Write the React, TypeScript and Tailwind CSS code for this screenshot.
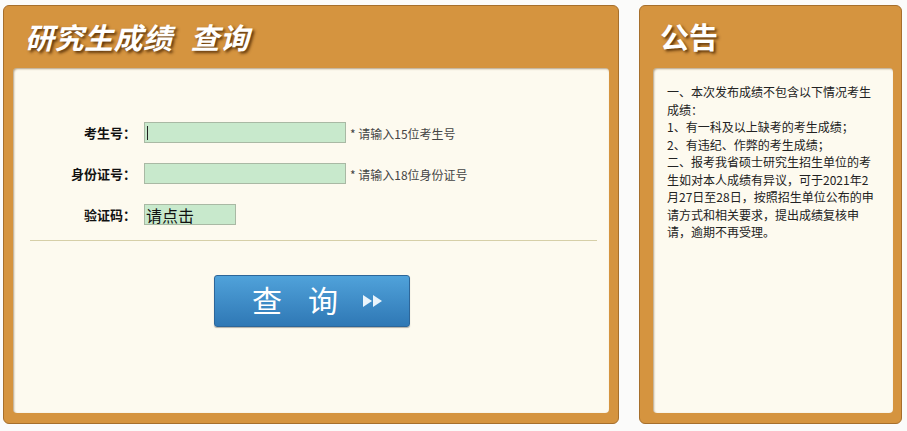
import React from "react";

const cjk = { fontFamily: '"Noto Sans CJK SC", "Noto Sans", sans-serif' };

function Row({ label, hint, children }: { label: string; hint?: string; children: React.ReactNode }) {
  return (
    <div className="flex items-center h-[21px]">
      <div className="w-[123px] text-right text-[13px] font-bold text-[#111] leading-none">{label}</div>
      <div className="ml-[8px] flex items-center">{children}</div>
      {hint && <div className="ml-[4px] text-[12px] text-[#444] leading-none mt-[3px]">{hint}</div>}
    </div>
  );
}

export default function App() {
  return (
    <div className="w-[907px] h-[431px] bg-[#fbfbfa] pt-[5px] pl-[3px] flex gap-[20px]" style={cjk}>
      {/* Left panel */}
      <div className="w-[616px] h-[419px] bg-[#d5943f] border border-[#a66f2c] rounded-[6px] flex flex-col px-[9px] pb-[10px]">
        <div className="h-[62px] flex items-center pl-[12px] pb-[2px]">
          <span className="text-[29px] font-bold italic text-white leading-none tracking-[0.5px] [text-shadow:2px_2px_3px_rgba(70,35,0,0.85)]">
            研究生成绩<span className="ml-[18px]">查询</span>
          </span>
        </div>
        <div className="flex-1 bg-[#fdfaef] rounded-[4px] shadow-[inset_1px_1px_2px_rgba(90,50,0,0.45)] flex flex-col pt-[54px]">
          <div className="flex flex-col gap-[20px]">
            <Row label="考生号：" hint="* 请输入15位考生号">
              <div className="w-[202px] h-[21px] bg-[#c8e9cc] border border-[#a9b9a4] flex items-center pl-[2px]">
                <div className="w-[1px] h-[14px] bg-[#222]" />
              </div>
            </Row>
            <Row label="身份证号：" hint="* 请输入18位身份证号">
              <div className="w-[202px] h-[21px] bg-[#c8e9cc] border border-[#a9b9a4]" />
            </Row>
            <Row label="验证码：">
              <div className="w-[92px] h-[21px] bg-[#c8e9cc] border border-[#a9b9a4] flex items-center pl-[1px] text-[16px] text-[#111] leading-none">
                请点击
              </div>
            </Row>
          </div>
          <div className="mt-[15px] ml-[17px] w-[567px] h-[1px] bg-[#d6cfa8]" />
          <div className="mt-[34px] flex justify-center pl-[2px]">
            <button className="w-[196px] h-[52px] rounded-[3px] border border-[#2d6699] bg-gradient-to-b from-[#50a2da] to-[#2f78b5] shadow-[0_1px_1px_rgba(0,0,0,0.3)] flex items-center pl-[37px] pb-[4px]">
              <span className="text-[30px] text-white leading-none">查</span>
              <span className="text-[30px] text-white leading-none ml-[26px]">询</span>
              <svg className="ml-[24px] mt-[3px]" width="22" height="14" viewBox="0 0 22 14">
                <polygon points="1,1 10,7 1,13" fill="#eaf4fb" />
                <polygon points="11,1 20,7 11,13" fill="#eaf4fb" />
              </svg>
            </button>
          </div>
        </div>
      </div>

      {/* Right panel */}
      <div className="w-[263px] h-[419px] bg-[#d5943f] border border-[#a66f2c] rounded-[6px] flex flex-col pl-[13px] pr-[8px] pb-[10px]">
        <div className="h-[62px] flex items-center pl-[7px] pb-[2px]">
          <span className="text-[29px] font-bold text-white leading-none [text-shadow:2px_2px_3px_rgba(70,35,0,0.85)]">公告</span>
        </div>
        <div className="flex-1 bg-[#fdfaef] rounded-[4px] shadow-[inset_1px_1px_2px_rgba(90,50,0,0.45)] pt-[15px] pl-[14px] pr-[17px] text-[12px] leading-[17.5px] text-[#222]">
          <p>一、本次发布成绩不包含以下情况考生成绩：</p>
          <p>1、有一科及以上缺考的考生成绩；</p>
          <p>2、有违纪、作弊的考生成绩；</p>
          <p>二、报考我省硕士研究生招生单位的考生如对本人成绩有异议，可于2021年2月27日至28日，按照招生单位公布的申请方式和相关要求，提出成绩复核申请，逾期不再受理。</p>
        </div>
      </div>
    </div>
  );
}
